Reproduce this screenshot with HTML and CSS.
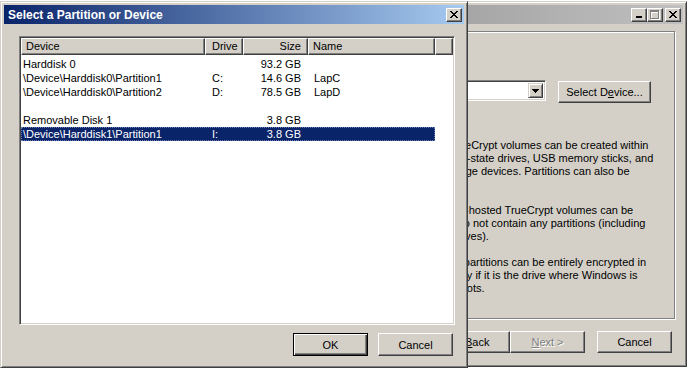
FILE: index.html
```html
<!DOCTYPE html>
<html lang="en">
<head>
    <meta charset="UTF-8">
    <title>Select a Partition or Device</title>
<link rel="stylesheet" href="styles.css">
</head>
<body>

<!-- wizard window (behind) -->
<div class="window wizard">
    <div class="titlebar inactive">
        <span class="title">TrueCrypt Volume Creation Wizard</span>
        <span class="cbtn">
            <svg width="8" height="7" viewBox="0 0 8 7"><path d="M1 5h6v2H1z" fill="#000"/></svg>
        </span>
        <span class="cbtn off">
            <svg width="10" height="10" viewBox="0 0 10 10"><path d="M1 1h9v9H1zM2 3h7v6H2z" fill="#fff" fill-rule="evenodd"/><path d="M0 0h9v9H0zM1 2h7v6H1z" fill="#808080" fill-rule="evenodd"/></svg>
        </span>
        <span class="cbtn close">
            <svg width="8" height="7" viewBox="0 0 8 7"><path d="M0 0h2v1H0zM6 0h2v1H6zM1 1h2v1H1zM5 1h2v1H5zM2 2h4v1H2zM3 3h2v1H3zM2 4h4v1H2zM1 5h2v1H1zM5 5h2v1H5zM0 6h2v1H0zM6 6h2v1H6z" fill="#000"/></svg>
        </span>
    </div>
    <div class="wizard-body">
        <div class="wizard-panel">
            <div class="location-row">
                <div class="combo">
                    <span class="combo-btn">
                        <svg width="7" height="4" viewBox="0 0 7 4"><path d="M0 0h7v1H0zM1 1h5v1H1zM2 2h3v1H2zM3 3h1v1H3z" fill="#000"/></svg>
                    </span>
                </div>
                <button class="btn small device-btn">Select D<u>e</u>vice...</button>
            </div>
            <p class="help first">Encrypted device-hosted TrueCrypt volumes can be created within<br>partitions on hard disks, solid-state drives, USB memory sticks, and<br>on any other supported storage devices. Partitions can also be<br>encrypted in place.</p>
            <p class="help">In addition, encrypted device-hosted TrueCrypt volumes can be<br>created within devices that do not contain any partitions (including<br>hard disks and solid-state drives).</p>
            <p class="help">Note: A device that contains partitions can be entirely encrypted in<br>place (using a single key) only if it is the drive where Windows is<br>installed and from which it boots.</p>
        </div>
        <div class="wizard-buttons">
            <button class="btn small">&lt; <u>B</u>ack</button>
            <button class="btn small" disabled><u>N</u>ext &gt;</button>
            <button class="btn small cancel">Cancel</button>
        </div>
    </div>
</div>

<!-- device dialog (front) -->
<div class="window dialog">
    <div class="titlebar active">
        <span class="title">Select a Partition or Device</span>
        <span class="cbtn">
            <svg width="8" height="7" viewBox="0 0 8 7"><path d="M0 0h2v1H0zM6 0h2v1H6zM1 1h2v1H1zM5 1h2v1H5zM2 2h4v1H2zM3 3h2v1H3zM2 4h4v1H2zM1 5h2v1H1zM5 5h2v1H5zM0 6h2v1H0zM6 6h2v1H6z" fill="#000"/></svg>
        </span>
    </div>
    <div class="dialog-body">
        <div class="listview">
            <div class="lv-header">
                <span class="col col-device">Device</span>
                <span class="col col-drive">Drive</span>
                <span class="col col-size">Size</span>
                <span class="col col-name">Name</span>
                <span class="col col-fill"></span>
            </div>
            <div id="rows"></div>
        </div>
        <div class="dialog-buttons">
            <button class="btn default">OK</button>
            <button class="btn">Cancel</button>
        </div>
    </div>
</div>

<script>
    const devices = [
        { device: "Harddisk 0", drive: "", size: "93.2 GB", name: "" },
        { device: "\\Device\\Harddisk0\\Partition1", drive: "C:", size: "14.6 GB", name: "LapC" },
        { device: "\\Device\\Harddisk0\\Partition2", drive: "D:", size: "78.5 GB", name: "LapD" },
        { device: "", drive: "", size: "", name: "" },
        { device: "Removable Disk 1", drive: "", size: "3.8 GB", name: "" },
        { device: "\\Device\\Harddisk1\\Partition1", drive: "I:", size: "3.8 GB", name: "", selected: true }
    ];

    const rows = document.getElementById('rows');

    devices.forEach(d => {
        rows.innerHTML += `
            <div class="lv-row${d.selected ? ' selected' : ''}">
                <span class="cell-device">${d.device}</span>
                <span class="cell-drive">${d.drive}</span>
                <span class="cell-size">${d.size}</span>
                <span class="cell-name">${d.name}</span>
            </div>
        `;
    });
</script>

</body>
</html>
```

FILE: styles.css
```css
body {
    margin: 0;
    background: #fff;
    font-family: "Liberation Sans", Arial, sans-serif;
    font-size: 11px;
    color: #000;
}
button {
    font-family: inherit;
    font-size: 11px;
}

/* window frames */
.window {
    position: absolute;
    box-sizing: border-box;
    display: flex;
    flex-direction: column;
    background: #d4d0c8;
    border: 1px solid;
    border-color: #d4d0c8 #404040 #404040 #d4d0c8;
    box-shadow: inset 1px 1px #fff, inset -1px -1px #808080;
    padding: 3px;
}
.wizard {
    left: 150px;
    top: 1px;
    width: 537px;
    height: 366px;
}
.dialog {
    left: 0;
    top: 1px;
    width: 468px;
    height: 367px;
}

.titlebar {
    height: 19px;
    display: flex;
    align-items: center;
    padding: 0 2px 0 4px;
    flex-shrink: 0;
}
.titlebar.active {
    background: linear-gradient(to right, #0a246a, #a6caf0);
    color: #fff;
}
.titlebar.inactive {
    background: linear-gradient(to right, #808080, #c0c0c0);
    color: #d4d0c8;
}
.title {
    flex: 1;
    font-weight: bold;
    font-size: 12px;
    white-space: nowrap;
}
.cbtn {
    box-sizing: border-box;
    width: 16px;
    height: 14px;
    display: flex;
    align-items: center;
    justify-content: center;
    background: #d4d0c8;
    border: 1px solid;
    border-color: #fff #404040 #404040 #fff;
    box-shadow: inset -1px -1px #808080;
}
.cbtn.close {
    margin-left: 2px;
}

/* buttons */
.btn {
    box-sizing: border-box;
    width: 75px;
    height: 23px;
    padding: 0;
    color: #000;
    background: #d4d0c8;
    border: 1px solid;
    border-color: #fff #404040 #404040 #fff;
    box-shadow: inset -1px -1px #808080;
}
.btn.small {
    height: 22px;
}
.btn.default {
    border-color: #000;
    box-shadow: inset 1px 1px #fff, inset -1px -1px #404040, inset -2px -2px #808080;
}
.btn:disabled {
    color: #808080;
    text-shadow: 1px 1px #fff;
}

/* wizard */
.wizard-body {
    flex: 1;
    display: flex;
    flex-direction: column;
    padding: 7px 8px 0 0;
}
.wizard-panel {
    box-sizing: border-box;
    height: 288px;
    margin-left: 156px;
    padding: 48px 0 0 14px;
    border: 1px solid #808080;
    box-shadow: 1px 1px #fff, inset 1px 1px #fff;
}
.location-row {
    display: flex;
    align-items: flex-start;
    gap: 10px;
    margin-left: -2px;
}
.combo {
    box-sizing: border-box;
    width: 223px;
    height: 21px;
    display: flex;
    justify-content: flex-end;
    padding: 2px;
    background: #fff;
    border: 1px solid;
    border-color: #808080 #fff #fff #808080;
    box-shadow: inset 1px 1px #404040, inset -1px -1px #d4d0c8;
}
.combo-btn {
    box-sizing: border-box;
    width: 15px;
    height: 15px;
    display: flex;
    align-items: center;
    justify-content: center;
    background: #d4d0c8;
    border: 1px solid;
    border-color: #d4d0c8 #404040 #404040 #d4d0c8;
    box-shadow: inset 1px 1px #fff, inset -1px -1px #808080;
}
.device-btn {
    width: 93px;
    margin-left: 2px;
    margin-top: 1px;
}
.help {
    margin: 0 0 13px;
    line-height: 13px;
    white-space: nowrap;
}
.help.first {
    margin-top: 36px;
}
.wizard-buttons {
    display: flex;
    justify-content: flex-end;
    margin-top: 12px;
    padding-right: 3px;
}
.wizard-buttons .cancel {
    margin-left: 12px;
}

/* device list */
.dialog-body {
    flex: 1;
    padding: 12px 0 0 15px;
}
.listview {
    box-sizing: border-box;
    width: 436px;
    height: 289px;
    padding: 1px;
    background: #fff;
    border: 1px solid;
    border-color: #808080 #fff #fff #808080;
    box-shadow: inset 1px 1px #404040, inset -1px -1px #d4d0c8;
}
.lv-header {
    display: flex;
    height: 17px;
}
.col {
    box-sizing: border-box;
    height: 17px;
    line-height: 15px;
    background: #d4d0c8;
    border: 1px solid;
    border-color: #fff #404040 #404040 #fff;
    box-shadow: inset -1px -1px #808080;
    white-space: nowrap;
}
.col-device { width: 184px; padding-left: 4px; }
.col-drive { width: 38px; padding-left: 6px; }
.col-size { width: 65px; padding-right: 6px; text-align: right; }
.col-name { width: 127px; padding-left: 4px; }
.col-fill { flex: 1; }

#rows {
    padding-top: 2px;
}
.lv-row {
    display: grid;
    grid-template-columns: 184px 38px 65px 127px;
    width: 414px;
    height: 14px;
    line-height: 14px;
    white-space: nowrap;
}
.lv-row.selected {
    background: #0a246a;
    color: #fff;
    outline: 1px dotted #6d7cae;
    outline-offset: -1px;
}
.cell-device { padding-left: 2px; }
.cell-drive { padding-left: 7px; }
.cell-size { padding-right: 7px; text-align: right; }
.cell-name { padding-left: 6px; }

.dialog-buttons {
    display: flex;
    justify-content: flex-end;
    gap: 10px;
    margin-top: 8px;
    padding-right: 11px;
}
```
